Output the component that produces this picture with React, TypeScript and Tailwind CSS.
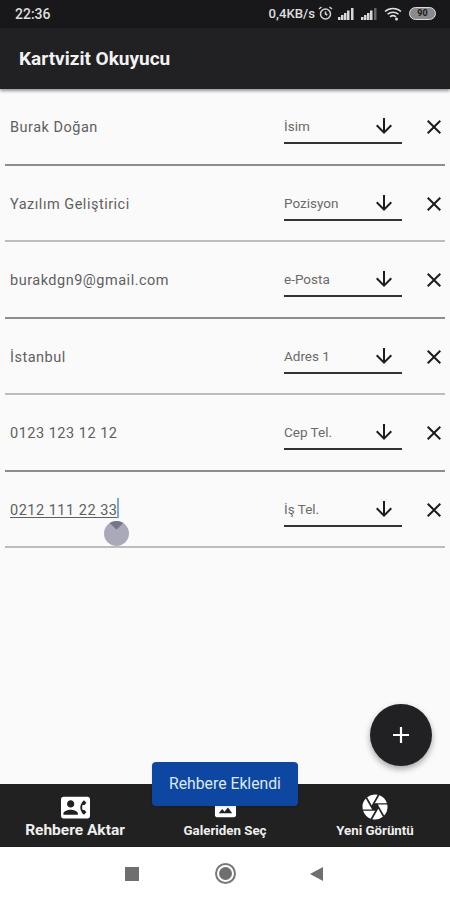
import { MdArrowDownward, MdCamera, MdClose, MdContactPhone, MdPhotoSizeSelectActual } from "react-icons/md";

interface Field {
  value: string;
  label: string;
}

const fields: Field[] = [
  { value: "Burak Doğan", label: "İsim" },
  { value: "Yazılım Geliştirici", label: "Pozisyon" },
  { value: "burakdgn9@gmail.com", label: "e-Posta" },
  { value: "İstanbul", label: "Adres 1" },
  { value: "0123 123 12 12", label: "Cep Tel." },
  { value: "0212 111 22 33", label: "İş Tel." },
];

function SignalIcon({ faded }: { faded?: boolean }) {
  return (
    <svg width="17" height="13" viewBox="0 0 17 13" fill="#d8d8d8">
      <rect x="0" y="10" width="2.500" height="3" />
      <rect x="3" y="8" width="2.500" height="5" />
      <rect x="6" y="6" width="2.500" height="7" />
      <rect x="9" y="3.500" width="2.500" height="9.500" />
      <rect x="13" y="1" width="2.500" height="12" opacity={faded ? 0.4 : 1} />
    </svg>
  );
}

function StatusBar() {
  return (
    <div className="flex h-[28px] shrink-0 items-center justify-between bg-[#18181a] pl-[15px] pr-[14px] text-[#dedede]">
      <span className="text-[14px] font-medium">22:36</span>
      <div className="flex items-center">
        <span className="text-[13.200px] font-medium">0,4KB/s</span>
        <svg className="ml-[3px]" width="15" height="15" viewBox="0 0 15 15" fill="none" stroke="#d4d4d4" strokeWidth="1.500">
          <circle cx="7.500" cy="8" r="5" />
          <path d="M7.500 5.500V8l1.800 1M1 3l2.500-2M14 3l-2.500-2" />
        </svg>
        <span className="ml-[5px] flex">
          <SignalIcon />
        </span>
        <span className="ml-[6px] flex">
          <SignalIcon faded />
        </span>
        <svg className="ml-[6px]" width="18" height="14" viewBox="0 0 18 14" fill="none" stroke="#e0e0e0" strokeWidth="1.500">
          <path d="M1 4.500c4.500-4 11.500-4 16 0M3.500 7.200c3-2.600 8-2.600 11 0M6 9.800c1.800-1.400 4.200-1.400 6 0" />
          <circle cx="12.500" cy="12" r="1.500" fill="#e0e0e0" stroke="none" />
        </svg>
        <div className="ml-[7px] flex h-[13px] w-[27px] items-center justify-center rounded-full border border-[#dcdcdc] bg-[#8a8a8a] text-[9px] font-bold leading-none text-[#18181a]">
          90
        </div>
      </div>
    </div>
  );
}

function FieldRow({ field, selected, faint }: { field: Field; selected: boolean; faint: boolean }) {
  return (
    <div className={`mx-[5px] flex h-[76.500px] shrink-0 items-center border-b-[2px] pl-[5px] pt-[2px] ${faint ? "border-[#bdbdbd]" : "border-[#8c8c8c]"}`}>
      <div className="relative flex-1">
        <span className={`text-[14.500px] tracking-[0.5px] text-[#5f5f5f] ${selected ? "underline underline-offset-2" : ""}`}>
          {field.value}
        </span>
        {selected && (
          <>
            <div className="absolute left-[107px] top-[0px] h-[20px] w-[2px] bg-[#7ba6e0]" />
            <div className="absolute left-[94px] top-[23px] h-[25px] w-[25px] overflow-hidden rounded-full bg-[#a9a9ba]">
              <div className="ml-[6px] mt-[-7px] h-[13px] w-[13px] rotate-45 bg-[#75758c]" />
            </div>
          </>
        )}
      </div>
      <div className="flex h-[34px] w-[118px] items-center justify-between border-b-[2px] border-[#333] pr-[6px]">
        <span className="text-[13.500px] text-[#6a6a6a]">{field.label}</span>
        <MdArrowDownward className="text-[24px] text-[#1c1c1c]" />
      </div>
      <div className="ml-[20px] mr-[-1px] flex w-[24px] justify-center">
        <MdClose className="text-[24px] text-[#1c1c1c]" />
      </div>
    </div>
  );
}

function BarItem({ icon, label, labelClass }: { icon: React.ReactNode; label: string; labelClass: string }) {
  return (
    <div className="flex w-[150px] flex-col items-center pt-[8px]">
      <div className="flex h-[30px] items-center">{icon}</div>
      <span className={`font-bold leading-[18px] text-[#eeeeee] ${labelClass}`}>{label}</span>
    </div>
  );
}

export default function App() {
  return (
    <div className="relative flex h-[900px] w-[450px] flex-col overflow-hidden bg-[#fafafa] font-['Roboto',sans-serif]">
      <StatusBar />
      <header className="flex h-[61px] shrink-0 items-center bg-[#212123] pl-[19px] pt-[2px] shadow-[0_2px_3px_rgba(0,0,0,0.4)]">
        <h1 className="text-[19px] font-bold text-[#f2f2f2]">Kartvizit Okuyucu</h1>
      </header>

      <main className="flex-1">
        {fields.map((field, i) => (
          <FieldRow key={field.label} field={field} selected={i === fields.length - 1} faint={i % 2 === 1} />
        ))}
      </main>

      <nav className="flex h-[63px] shrink-0 items-start justify-between bg-[#212121]">
        <BarItem icon={<MdContactPhone className="text-[29px] text-white" />} label="Rehbere Aktar" labelClass="mt-[-1px] text-[15.500px]" />
        <BarItem icon={<MdPhotoSizeSelectActual className="mt-[3px] text-[23px] text-white" />} label="Galeriden Seç" labelClass="text-[13.300px]" />
        <BarItem icon={<MdCamera className="text-[30px] text-white" />} label="Yeni Görüntü" labelClass="text-[13.300px]" />
      </nav>

      <div className="flex h-[53px] shrink-0 items-center justify-center bg-white pr-[2px]">
        <div className="h-[14px] w-[14px] bg-[#6f6f6f]" />
        <div className="ml-[76px] flex h-[21px] w-[21px] items-center justify-center rounded-full border-[2px] border-[#777]">
          <div className="h-[13px] w-[13px] rounded-full bg-[#6f6f6f]" />
        </div>
        <div className="ml-[74px] h-0 w-0 border-y-[7px] border-r-[13px] border-y-transparent border-r-[#6f6f6f]" />
      </div>

      <button className="absolute left-[370px] top-[704px] flex h-[62px] w-[62px] items-center justify-center rounded-full bg-[#212123] shadow-[0_3px_6px_rgba(0,0,0,0.35)]">
        <svg width="18" height="18" viewBox="0 0 18 18" stroke="#fff" strokeWidth="2.200">
          <path d="M9 1v16M1 9h16" />
        </svg>
      </button>

      <div className="absolute left-[152px] top-[762px] flex h-[44px] w-[146px] items-center justify-center rounded-[4px] bg-[#0d47a1] text-[15.750px] text-[#dfe8f5] shadow-sm">
        Rehbere Eklendi
      </div>
    </div>
  );
}
